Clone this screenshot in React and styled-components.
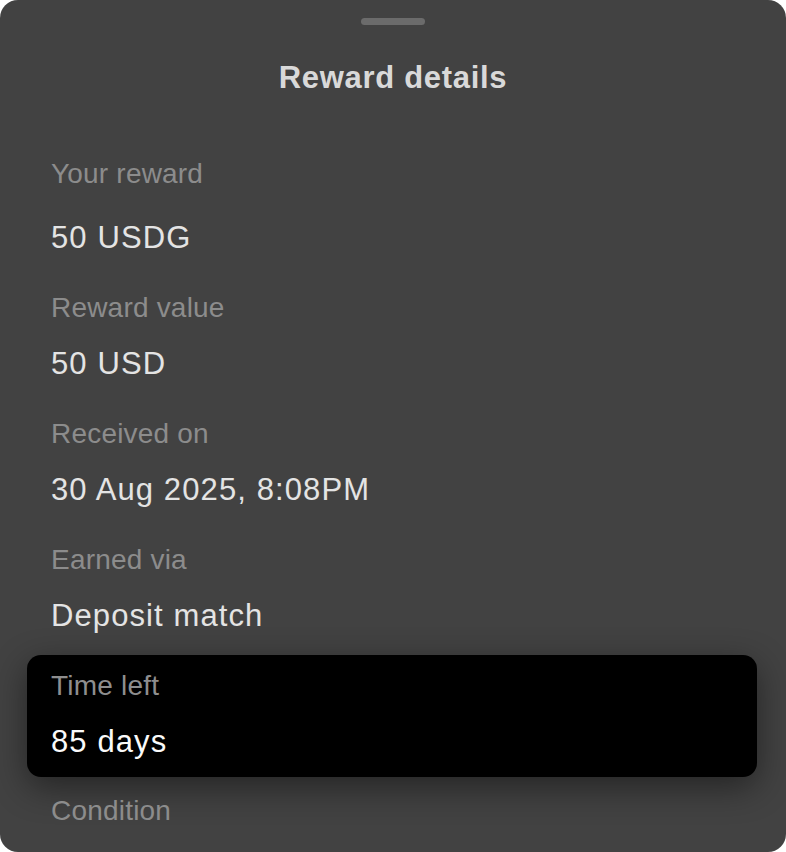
import React from "react";
import styled, { createGlobalStyle } from "styled-components";

const GlobalStyle = createGlobalStyle`
	html, body {
		margin: 0;
		padding: 0;
		background: #ffffff;
	}

	body {
		font-family: "Liberation Sans", Arial, sans-serif;
		-webkit-font-smoothing: antialiased;
	}
`;

// the bottom sheet itself
const Sheet = styled.section`
	box-sizing: border-box;
	width: 786px;
	height: 852px;
	overflow: hidden;
	display: flex;
	flex-direction: column;
	padding: 18px 51px 0;
	background-color: #424242;
	border-radius: 18px;
`;

const Handle = styled.div`
	align-self: center;
	width: 64px;
	height: 7px;
	border-radius: 4px;
	background-color: #6b6b6b;
`;

const Title = styled.h2`
	margin: 35px 0 0;
	text-align: center;
	font-size: 31px;
	line-height: 36px;
	font-weight: 700;
	letter-spacing: 0.7px;
	color: #d9d9d9;
`;

const List = styled.div`
	display: flex;
	flex-direction: column;
	gap: 36.5px;
	margin-top: 62px;
`;

const Field = styled.div`
	display: flex;
	flex-direction: column;
	gap: ${({ $first }) => ($first ? "29.5px" : "21.5px")};

	${({ $highlight }) =>
		$highlight &&
		`
		margin: -15px -22px -18px -24px;
		padding: 15px 22px 17px 24px;
		background-color: #000000;
		border-radius: 14px;
		box-shadow: 0 10px 34px rgba(0, 0, 0, 0.45);
	`}
`;

const Label = styled.span`
	font-size: 28px;
	line-height: 32px;
	letter-spacing: 0.2px;
	color: ${({ $highlight }) => ($highlight ? "#8e8e8e" : "#8c8c8c")};
`;

const Value = styled.span`
	font-size: 31px;
	line-height: 36px;
	letter-spacing: 1.1px;
	color: ${({ $highlight }) => ($highlight ? "#fafafa" : "#e4e4e4")};
`;

const fields = [
	{ label: "Your reward", value: "50 USDG" },
	{ label: "Reward value", value: "50 USD" },
	{ label: "Received on", value: "30 Aug 2025, 8:08PM" },
	{ label: "Earned via", value: "Deposit match" },
	{ label: "Time left", value: "85 days", highlight: true },
	{ label: "Condition" },
];

export default function App() {
	return (
		<>
			<GlobalStyle />
			<Sheet>
				<Handle />
				<Title>Reward details</Title>
				<List>
					{fields.map((f, i) => (
						<Field key={f.label} $first={i === 0} $highlight={f.highlight}>
							<Label $highlight={f.highlight}>{f.label}</Label>
							{f.value && <Value $highlight={f.highlight}>{f.value}</Value>}
						</Field>
					))}
				</List>
			</Sheet>
		</>
	);
}
